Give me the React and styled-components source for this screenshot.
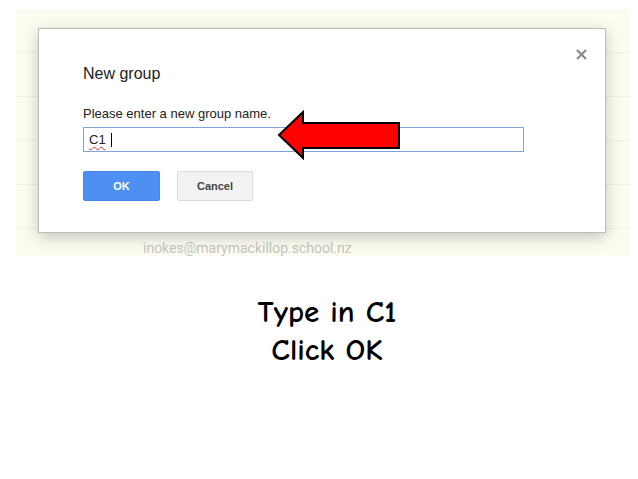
import React from "react";
import styled, { createGlobalStyle } from "styled-components";

const GlobalStyle = createGlobalStyle`
  html, body { margin: 0; padding: 0; background: #ffffff; }
  body { font-family: "Liberation Sans", Arial, sans-serif; }
`;

const Page = styled.div`
  padding: 9px 0 0 16px;
`;

const Panel = styled.div`
  position: relative;
  width: 614px;
  background: #fcfcf1;
`;

const Row = styled.div`
  box-sizing: border-box;
  height: ${(p) => (p.$last ? "27px" : "44px")};
  border-bottom: ${(p) => (p.$last ? "none" : "1px solid #f0f0e3")};
  padding: ${(p) => (p.$last ? "11px" : "20px")} 0 0 127px;
  font-family: Roboto, "Liberation Sans", sans-serif;
  font-size: 14px;
  line-height: 16px;
  color: #c4c4bc;
  overflow: hidden;
`;

const Dialog = styled.div`
  position: absolute;
  left: 22px;
  top: 19px;
  width: 568px;
  height: 205px;
  box-sizing: border-box;
  background: #ffffff;
  border: 1px solid #bdbdb4;
  box-shadow: 0 4px 14px rgba(0, 0, 0, 0.22);
  padding: 36px 0 0 44px;
`;

const Close = styled.div`
  position: absolute;
  right: 18px;
  top: 17px;
  width: 11px;
  height: 11px;
`;

const Title = styled.div`
  font-size: 16px;
  line-height: 18px;
  color: #222222;
`;

const Label = styled.div`
  margin-top: 23px;
  font-size: 13px;
  line-height: 16px;
  color: #222222;
`;

const Input = styled.div`
  margin-top: 5px;
  box-sizing: border-box;
  width: 441px;
  height: 25px;
  border: 1px solid #7ea4d8;
  padding: 0 0 0 5px;
  display: flex;
  align-items: center;
  font-size: 13px;
  color: #222222;
`;

const Typed = styled.span`
  text-decoration: underline wavy #e03030;
  text-decoration-thickness: 1px;
  text-underline-offset: 2px;
`;

const Caret = styled.span`
  display: inline-block;
  width: 1px;
  height: 14px;
  background: #000000;
  margin-left: 5px;
`;

const Buttons = styled.div`
  margin-top: 19px;
  display: flex;
  gap: 17px;
`;

const Button = styled.div`
  box-sizing: border-box;
  width: ${(p) => p.$w}px;
  height: 30px;
  border-radius: 2px;
  display: flex;
  align-items: center;
  justify-content: center;
  font-size: 11px;
  font-weight: bold;
  background: ${(p) => (p.$primary ? "#4d8ff3" : "#f3f3f3")};
  border: 1px solid ${(p) => (p.$primary ? "#4585ec" : "#dadada")};
  color: ${(p) => (p.$primary ? "#ffffff" : "#444444")};
`;

const Arrow = styled.svg`
  position: absolute;
  left: 261px;
  top: 101px;
`;

const Caption = styled.div`
  margin-top: 37px;
  text-align: center;
  font-family: "Comic Sans MS", "Comic Neue", "DejaVu Sans", sans-serif;
  font-weight: bold;
  font-size: 31px;
  line-height: 38px;
  color: #000000;
`;

const rows = ["jsmithers@marymackillop.school.nz", "", "", "", ""];

export default function App() {
  return (
    <>
      <GlobalStyle />
      <Page>
        <Panel>
          {rows.map((e, i) => (
            <Row key={i}>{e}</Row>
          ))}
          <Row $last>inokes@marymackillop.school.nz</Row>
          <Dialog>
            <Close>
              <svg width="11" height="11" viewBox="0 0 11 11">
                <path d="M1 1 L10 10 M10 1 L1 10" stroke="#8a8a8a" strokeWidth="2.2" />
              </svg>
            </Close>
            <Title>New group</Title>
            <Label>Please enter a new group name.</Label>
            <Input>
              <Typed>C1</Typed>
              <Caret />
            </Input>
            <Buttons>
              <Button $primary $w={77}>OK</Button>
              <Button $w={76}>Cancel</Button>
            </Buttons>
          </Dialog>
          <Arrow width="124" height="50" viewBox="0 0 124 50">
            <polygon
              points="2,25 26,2 26,13 122,13 122,38 26,38 26,48"
              fill="#ff0000"
              stroke="#000000"
              strokeWidth="2"
              strokeLinejoin="miter"
            />
          </Arrow>
        </Panel>
        <Caption>
          Type in C1
          <br />
          Click OK
        </Caption>
      </Page>
    </>
  );
}
